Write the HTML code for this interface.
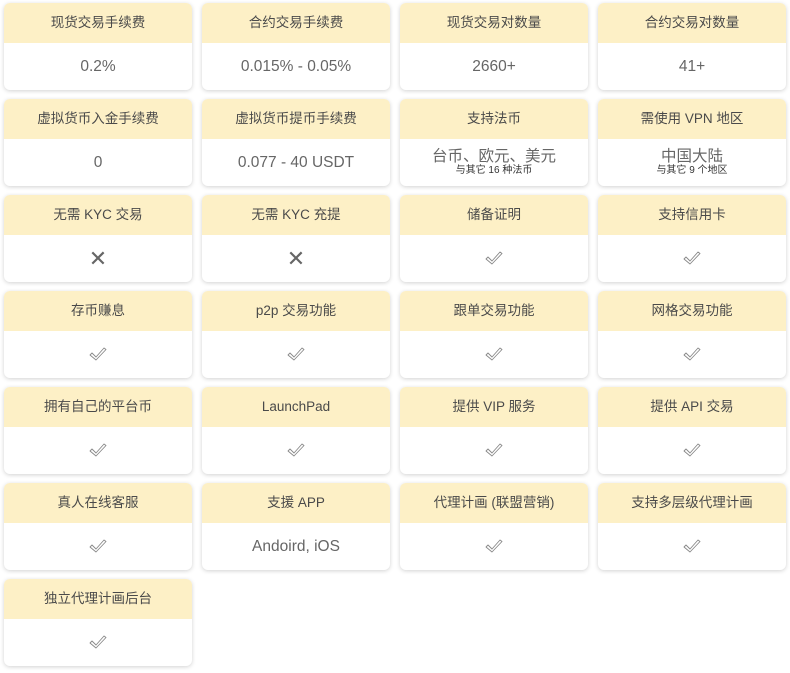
<!DOCTYPE html><html><head><meta charset="utf-8"><style>
body{margin:0;background:#fff;width:790px;height:673px;position:relative;font-family:"Liberation Sans","Noto Sans CJK SC",sans-serif;overflow:hidden}
.c{position:absolute;width:188px;height:87px;border-radius:6px;background:#fff;box-shadow:0 1px 4px rgba(0,0,0,.18);overflow:hidden}
.h{height:40px;background:#fdf0c6;color:#4a4a4a;font-size:13.5px;text-align:center;line-height:40px}
.b{height:46px;display:flex;flex-direction:column;align-items:center;justify-content:center;color:#666;font-size:15.5px;line-height:17px}
.b small{font-size:10px;color:#333;line-height:12px}
.x{font-size:22px;color:#666}
</style></head><body>
<script>
const chk='<svg width="18" height="16" viewBox="0 0 18 16"><path d="M1 9 L3 7 L7 11 L15 2 L17 3.5 L7 14 Z" fill="none" stroke="#888" stroke-width="0.9" stroke-linejoin="round"/></svg>';
const d=[["现货交易手续费","0.2%"],["合约交易手续费","0.015% - 0.05%"],["现货交易对数量","2660+"],["合约交易对数量","41+"],
["虚拟货币入金手续费","0"],["虚拟货币提币手续费","0.077 - 40 USDT"],["支持法币","台币、欧元、美元<small>与其它 16 种法币</small>"],["需使用 VPN 地区","中国大陆<small>与其它 9 个地区</small>"],
["无需 KYC 交易","X"],["无需 KYC 充提","X"],["储备证明","C"],["支持信用卡","C"],
["存币赚息","C"],["p2p 交易功能","C"],["跟单交易功能","C"],["网格交易功能","C"],
["拥有自己的平台币","C"],["LaunchPad","C"],["提供 VIP 服务","C"],["提供 API 交易","C"],
["真人在线客服","C"],["支援 APP","Andoird, iOS"],["代理计画 (联盟营销)","C"],["支持多层级代理计画","C"],
["独立代理计画后台","C"]];
let s="";d.forEach((e,i)=>{const x=4+(i%4)*198,y=3+Math.floor(i/4)*96;let v=e[1]=="C"?chk:e[1]=="X"?'<span class="x">✕</span>':e[1];
s+=`<div class="c" style="left:${x}px;top:${y}px"><div class="h">${e[0]}</div><div class="b">${v}</div></div>`});
document.write(s);
</script>
</body></html>
